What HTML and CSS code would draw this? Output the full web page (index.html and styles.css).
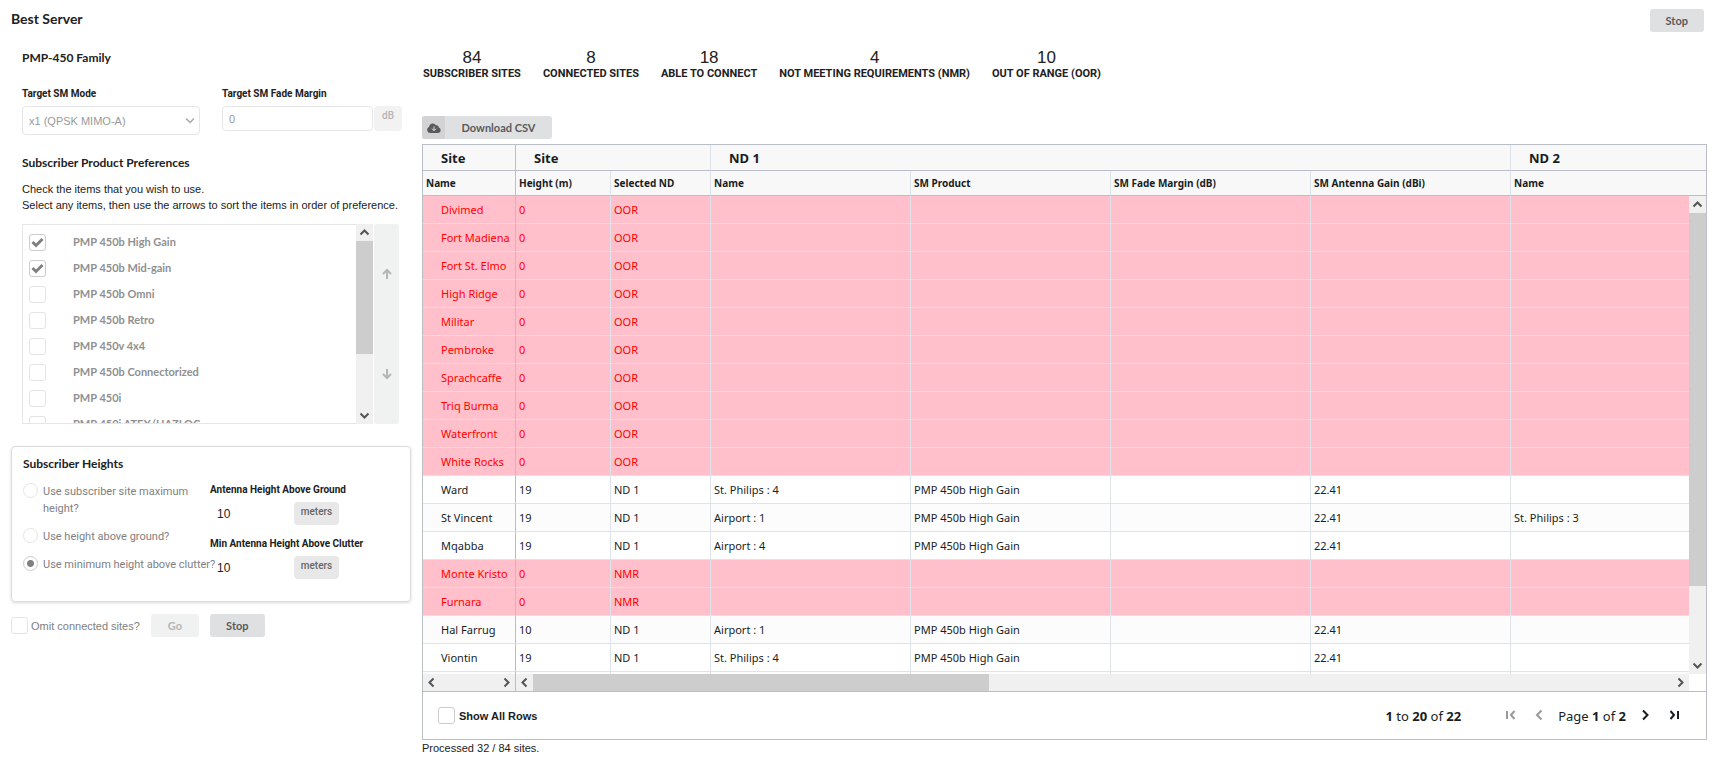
FILE: index.html
```html
<!DOCTYPE html>
<html lang="en">
<head>
<meta charset="utf-8">
<title>Best Server</title>
<link rel="stylesheet" href="styles.css">
</head>
<body>
<div class="page">
  <header class="page-header">
    <h1 class="page-title">Best Server</h1>
    <button class="btn" type="button">Stop</button>
  </header>
  <main class="layout">
    <form class="settings">
      <section class="family">
        <h2 class="heading">PMP-450 Family</h2>
        <div class="targets">
          <div class="field">
            <label class="label" for="mode">Target SM Mode</label>
            <select class="select" id="mode" disabled><option>x1 (QPSK MIMO-A)</option></select>
          </div>
          <div class="field">
            <label class="label" for="fade">Target SM Fade Margin</label>
            <div class="input-group">
              <input class="input" id="fade" type="text" value="0" disabled>
              <span class="unit">dB</span>
            </div>
          </div>
        </div>
        <h2 class="heading heading-prefs">Subscriber Product Preferences</h2>
        <p class="help">Check the items that you wish to use.<br>Select any items, then use the arrows to sort the items in order of preference.</p>
        <div class="picker">
          <ul class="products">
            <li><label class="product"><input class="check" type="checkbox" checked disabled>PMP 450b High Gain</label></li>
            <li><label class="product"><input class="check" type="checkbox" checked disabled>PMP 450b Mid-gain</label></li>
            <li><label class="product"><input class="check" type="checkbox" disabled>PMP 450b Omni</label></li>
            <li><label class="product"><input class="check" type="checkbox" disabled>PMP 450b Retro</label></li>
            <li><label class="product"><input class="check" type="checkbox" disabled>PMP 450v 4x4</label></li>
            <li><label class="product"><input class="check" type="checkbox" disabled>PMP 450b Connectorized</label></li>
            <li><label class="product"><input class="check" type="checkbox" disabled>PMP 450i</label></li>
            <li><label class="product"><input class="check" type="checkbox" disabled>PMP 450i ATEX/HAZLOC</label></li>
          </ul>
          <div class="vbar">
            <svg class="arrow" viewBox="0 0 17 17"><path d="M4.5 10.5l4-4 4 4"/></svg>
            <div class="vtrack"><div class="thumb list-thumb"></div></div>
            <svg class="arrow" viewBox="0 0 17 17"><path d="M4.5 6.500l4 4 4-4"/></svg>
          </div>
          <div class="sorter">
            <button class="sort" type="button" aria-label="Move up" disabled><svg viewBox="0 0 12 12"><path d="M6 11V2M2 6l4-4 4 4"/></svg></button>
            <button class="sort" type="button" aria-label="Move down" disabled><svg viewBox="0 0 12 12"><path d="M6 1v9M2 6l4 4 4-4"/></svg></button>
          </div>
        </div>
      </section>
      <section class="card">
        <h2 class="heading">Subscriber Heights</h2>
        <div class="heights">
          <div class="radios">
            <label class="choice choice-wrap"><input class="radio" type="radio" name="h" disabled><span>Use subscriber site maximum height?</span></label>
            <label class="choice"><input class="radio" type="radio" name="h" disabled><span>Use height above ground?</span></label>
            <label class="choice"><input class="radio" type="radio" name="h" checked disabled><span>Use minimum height above clutter?</span></label>
          </div>
          <div class="measures">
            <label class="label" for="ground">Antenna Height Above Ground</label>
            <div class="measure"><input class="plain" id="ground" type="text" value="10"><span class="unit unit-dark">meters</span></div>
            <label class="label" for="clutter">Min Antenna Height Above Clutter</label>
            <div class="measure"><input class="plain" id="clutter" type="text" value="10"><span class="unit unit-dark">meters</span></div>
          </div>
        </div>
      </section>
      <div class="actions">
        <label class="omit"><input class="check" type="checkbox" disabled>Omit connected sites?</label>
        <button class="btn btn-go" type="button" disabled>Go</button>
        <button class="btn btn-stop" type="button">Stop</button>
      </div>
    </form>
    <section class="results">
      <dl class="stats">
        <div class="stat"><dt>SUBSCRIBER SITES</dt><dd>84</dd></div>
        <div class="stat"><dt>CONNECTED SITES</dt><dd>8</dd></div>
        <div class="stat"><dt>ABLE TO CONNECT</dt><dd>18</dd></div>
        <div class="stat"><dt>NOT MEETING REQUIREMENTS (NMR)</dt><dd>4</dd></div>
        <div class="stat"><dt>OUT OF RANGE (OOR)</dt><dd>10</dd></div>
      </dl>
      <button class="download" type="button">
        <span class="download-icon"><svg viewBox="0 0 14 10"><path class="cloud" d="M3.2 10A3.2 3.2 0 0 1 2 3.9 3.8 3.8 0 0 1 9 2.2a2.3 2.3 0 0 1 2.8 2.4A2.8 2.8 0 0 1 11.3 10z"/><path class="down" d="M7 3.5v4M5 5.7l2 2 2-2"/></svg></span>
        <span class="download-text">Download CSV</span>
      </button>
      <div class="grid">
        <div class="viewport">
          <table class="table">
            <colgroup><col class="c-site"><col class="c-height"><col class="c-nd"><col class="c-wide"><col class="c-wide"><col class="c-wide"><col class="c-wide"><col></colgroup>
            <thead>
              <tr class="groups"><th>Site</th><th colspan="2">Site</th><th colspan="4">ND 1</th><th>ND 2</th></tr>
              <tr class="columns"><th>Name</th><th>Height (m)</th><th>Selected ND</th><th>Name</th><th>SM Product</th><th>SM Fade Margin (dB)</th><th>SM Antenna Gain (dBi)</th><th>Name</th></tr>
            </thead>
            <tbody>
              <tr class="bad"><td>Divimed</td><td>0</td><td>OOR</td><td></td><td></td><td></td><td></td><td></td></tr>
              <tr class="bad"><td>Fort Madiena</td><td>0</td><td>OOR</td><td></td><td></td><td></td><td></td><td></td></tr>
              <tr class="bad"><td>Fort St. Elmo</td><td>0</td><td>OOR</td><td></td><td></td><td></td><td></td><td></td></tr>
              <tr class="bad"><td>High Ridge</td><td>0</td><td>OOR</td><td></td><td></td><td></td><td></td><td></td></tr>
              <tr class="bad"><td>Militar</td><td>0</td><td>OOR</td><td></td><td></td><td></td><td></td><td></td></tr>
              <tr class="bad"><td>Pembroke</td><td>0</td><td>OOR</td><td></td><td></td><td></td><td></td><td></td></tr>
              <tr class="bad"><td>Sprachcaffe</td><td>0</td><td>OOR</td><td></td><td></td><td></td><td></td><td></td></tr>
              <tr class="bad"><td>Triq Burma</td><td>0</td><td>OOR</td><td></td><td></td><td></td><td></td><td></td></tr>
              <tr class="bad"><td>Waterfront</td><td>0</td><td>OOR</td><td></td><td></td><td></td><td></td><td></td></tr>
              <tr class="bad"><td>White Rocks</td><td>0</td><td>OOR</td><td></td><td></td><td></td><td></td><td></td></tr>
              <tr><td>Ward</td><td>19</td><td>ND 1</td><td>St. Philips : 4</td><td>PMP 450b High Gain</td><td></td><td>22.41</td><td></td></tr>
              <tr><td>St Vincent</td><td>19</td><td>ND 1</td><td>Airport : 1</td><td>PMP 450b High Gain</td><td></td><td>22.41</td><td>St. Philips : 3</td></tr>
              <tr><td>Mqabba</td><td>19</td><td>ND 1</td><td>Airport : 4</td><td>PMP 450b High Gain</td><td></td><td>22.41</td><td></td></tr>
              <tr class="bad"><td>Monte Kristo</td><td>0</td><td>NMR</td><td></td><td></td><td></td><td></td><td></td></tr>
              <tr class="bad"><td>Furnara</td><td>0</td><td>NMR</td><td></td><td></td><td></td><td></td><td></td></tr>
              <tr><td>Hal Farrug</td><td>10</td><td>ND 1</td><td>Airport : 1</td><td>PMP 450b High Gain</td><td></td><td>22.41</td><td></td></tr>
              <tr><td>Viontin</td><td>19</td><td>ND 1</td><td>St. Philips : 4</td><td>PMP 450b High Gain</td><td></td><td>22.41</td><td></td></tr>
              <tr><td></td><td></td><td></td><td></td><td></td><td></td><td></td><td></td></tr>
            </tbody>
          </table>
          <div class="vbar grid-vbar">
            <svg class="arrow" viewBox="0 0 17 17"><path d="M4.5 10.5l4-4 4 4"/></svg>
            <div class="vtrack"><div class="thumb grid-thumb"></div></div>
            <svg class="arrow" viewBox="0 0 17 17"><path d="M4.5 6.500l4 4 4-4"/></svg>
          </div>
        </div>
        <div class="hbars">
          <div class="hbar hbar-pinned">
            <svg class="arrow" viewBox="0 0 17 17"><path d="M10.5 4.5l-4 4 4 4"/></svg>
            <svg class="arrow" viewBox="0 0 17 17"><path d="M6.500 4.5l4 4-4 4"/></svg>
          </div>
          <div class="hbar hbar-main">
            <svg class="arrow" viewBox="0 0 17 17"><path d="M10.5 4.5l-4 4 4 4"/></svg>
            <div class="htrack"><div class="thumb h-thumb"></div></div>
            <svg class="arrow" viewBox="0 0 17 17"><path d="M6.500 4.5l4 4-4 4"/></svg>
          </div>
        </div>
        <footer class="pager">
          <label class="show-all"><input class="check check-on" type="checkbox">Show All Rows</label>
          <span class="range"><b>1</b> to <b>20</b> of <b>22</b></span>
          <nav class="pages">
            <button class="nav" type="button" aria-label="First page" disabled><svg viewBox="0 0 16 16"><path d="M5 3v8M12.500 3L9 7l3.500 4"/></svg></button>
            <button class="nav" type="button" aria-label="Previous page" disabled><svg viewBox="0 0 16 16"><path d="M11.500 2.500L7 7l4.500 4.500"/></svg></button>
            <span>Page <b>1</b> of <b>2</b></span>
            <button class="nav" type="button" aria-label="Next page"><svg viewBox="0 0 16 16"><path d="M5 2.500l4.500 4.500-4.500 4.500"/></svg></button>
            <button class="nav" type="button" aria-label="Last page"><svg viewBox="0 0 16 16"><path d="M12 3v8M4.500 3l3.500 4-3.500 4"/></svg></button>
          </nav>
        </footer>
      </div>
      <p class="status">Processed 32 / 84 sites.</p>
    </section>
  </main>
</div>
</body>
</html>
```
FILE: styles.css
```css
* { box-sizing: border-box; }
body {
  margin: 0;
  background: #fff;
  color: #212121;
  font: 11px/16px "Liberation Sans", Arial, sans-serif;
}
h1, h2, p, ul, dl, dd { margin: 0; padding: 0; }
ul { list-style: none; }
button, input, select { font: inherit; color: inherit; margin: 0; }
button { border: 0; background: none; padding: 0; }
svg { display: block; fill: none; stroke: currentColor; }

.page { display: flex; flex-direction: column; height: 100vh; min-height: 660px; }
.page-header {
  display: flex;
  align-items: flex-start;
  justify-content: space-between;
  padding: 9px 14px 0 11px;
}
.page-title { font: bold 14px/20px Lato, sans-serif; }
.btn {
  height: 23px;
  padding: 0 16px;
  border-radius: 3px;
  background: #dfe0e2;
  color: #5a5a5a;
  font: bold 11px/23px Lato, sans-serif;
}
.btn-go { padding: 0 17px; background: #f0f2f2; color: #b4b6b6; }

.layout {
  flex: 1;
  min-height: 0;
  display: grid;
  grid-template-columns: 400px minmax(0, 1fr);
  gap: 11px;
  padding: 0 11px;
}
.heading { font: bold 12px/18px Lato, sans-serif; }
.family { padding: 17px 12px 0 11px; }
.targets { display: grid; grid-template-columns: 178px 180px; gap: 22px; margin-top: 20px; }
.field { display: flex; flex-direction: column; gap: 5px; }
.label { font: bold 10px/14px Roboto, sans-serif; }
.select {
  appearance: none;
  width: 100%;
  height: 29px;
  padding: 0 6px;
  border: 1px solid #e6e6e6;
  border-radius: 4px;
  background: #fff url("data:image/svg+xml,%3Csvg xmlns='http://www.w3.org/2000/svg' width='10' height='8'%3E%3Cpath d='M1 1.500l4 4 4-4' fill='none' stroke='%23a8a8a8' stroke-width='1.500'/%3E%3C/svg%3E") no-repeat right 4px center;
  color: #999;
  opacity: 1;
}
.input-group { display: flex; gap: 1px; }
.input {
  flex: 1;
  min-width: 0;
  height: 25px;
  padding: 0 6px;
  border: 1px solid #e6e6e6;
  border-radius: 4px;
  background: #fff;
  color: #999;
}
.unit {
  width: 28px;
  height: 25px;
  border-radius: 4px;
  background: #f2f2f2;
  color: #b5b5b5;
  font: 500 10px/19px Roboto, sans-serif;
  text-align: center;
}
.unit-dark { width: 45px; height: 23px; background: #e8e8e8; color: #666; }
.heading-prefs { margin-top: 19px; }
.help { margin-top: 9px; white-space: nowrap; }

.picker { display: flex; height: 200px; margin-top: 11px; }
.products {
  flex: 1;
  overflow: hidden;
  padding: 4px 0 0 6px;
  border: 1px solid #e6e6e6;
  border-right: 0;
}
.product {
  display: flex;
  align-items: center;
  gap: 27px;
  height: 26px;
  color: #909090;
  font: bold 11px/16px Lato, sans-serif;
}
.check {
  appearance: none;
  flex: none;
  width: 17px;
  height: 17px;
  border: 1px solid #e4e4e4;
  border-radius: 3px;
  background: #fff;
}
.check:checked {
  border-color: #ccc;
  background: #fff url("data:image/svg+xml,%3Csvg xmlns='http://www.w3.org/2000/svg' width='15' height='15'%3E%3Cpath d='M2.500 7l3.500 3.500 6.500-6.500' fill='none' stroke='%23808080' stroke-width='3'/%3E%3C/svg%3E") center;
}
.check-on { border-color: #ccc; }
.vbar { display: flex; flex-direction: column; width: 17px; background: #f0f0f0; }
.arrow { flex: none; width: 17px; height: 17px; color: #555; stroke-width: 2; }
.vtrack, .htrack { flex: 1; }
.thumb { background: #cdcdcd; }
.list-thumb { height: 68%; }
.sorter {
  display: flex;
  flex-direction: column;
  width: 25px;
  margin-left: 1px;
  border-radius: 3px;
  background: #f0f2f2;
}
.sort { flex: 1; display: grid; place-items: center; color: #b4b6b6; }
.sort svg { width: 12px; height: 12px; stroke-width: 2; }

.card {
  margin-top: 22px;
  padding: 8px 11px 10px;
  border: 1px solid #dcdcdc;
  border-radius: 4px;
  box-shadow: 0 1px 3px rgba(0, 0, 0, .15);
}
.heights { display: grid; grid-template-columns: 187px 1fr; margin-top: 10px; }
.radios { display: flex; flex-direction: column; gap: 11px; color: #808080; font: 11px/17px Roboto, sans-serif; }
.choice { display: flex; gap: 5px; white-space: nowrap; }
.choice-wrap { padding-right: 20px; white-space: normal; }
.radio {
  appearance: none;
  flex: none;
  width: 15px;
  height: 15px;
  border: 1px solid #e4e4e4;
  border-radius: 50%;
}
.radio:checked { border-color: #ccc; background: radial-gradient(circle, #808080 3px, transparent 4px); }
.measures { display: flex; flex-direction: column; }
.measure { display: flex; gap: 11px; margin: 5px 0 12px; }
.plain { width: 73px; height: 23px; padding: 0 7px; border: 0; background: none; font-size: 12px; }
.actions { display: flex; align-items: center; gap: 11px; margin-top: 12px; }
.omit { display: flex; align-items: center; gap: 3px; color: #808080; }

.results { display: flex; flex-direction: column; align-items: flex-start; min-height: 0; padding: 16px 0 10px; }
.stats { display: flex; gap: 22px; padding-left: 1px; }
.stat { display: flex; flex-direction: column-reverse; text-align: center; }
.stat dt { font: bold 11px/12px Roboto, sans-serif; }
.stat dd { font-size: 17px; line-height: 20px; }
.download {
  display: flex;
  height: 23px;
  width: 130px;
  flex: none;
  margin-top: 36px;
  border-radius: 3px;
  overflow: hidden;
  background: #dfe0e2;
  color: #5a5a5a;
  font: bold 11px/23px Lato, sans-serif;
}
.download-icon { display: grid; place-items: center; width: 23px; height: 23px; background: #d2d3d5; }
.download-icon svg { width: 14px; height: 10px; }
.cloud { fill: #5a5a5a; stroke: none; }
.down { stroke: #dfe0e2; }
.download-text { flex: 1; }

.grid {
  flex: 1;
  align-self: stretch;
  min-height: 0;
  display: flex;
  flex-direction: column;
  margin-top: 5px;
  border: 1px solid #babfc7;
  color: #181d1f;
  font: 11px/16px "Noto Sans", sans-serif;
}
.viewport { position: relative; flex: 1; min-height: 0; overflow: hidden; }
.table { width: 100%; table-layout: fixed; border-collapse: separate; border-spacing: 0; }
.c-site { width: 93px; }
.c-height { width: 95px; }
.c-nd { width: 100px; }
.c-wide { width: 200px; }
.table th {
  padding: 0 3px;
  border-bottom: 1px solid #babfc7;
  border-right: 1px solid #dde2eb;
  background: #f8f8f8;
  text-align: left;
  font-size: 10px;
}
.table .groups th { height: 26px; padding: 0 18px; font-size: 13px; }
.columns th { height: 25px; }
.table td {
  height: 28px;
  padding: 0 3px;
  border-bottom: 1px solid #dde2eb;
  border-right: 1px solid #dde2eb;
  white-space: nowrap;
}
.table td:first-child { padding: 0 0 0 18px; }
.table th:first-child, .table td:first-child { border-right-color: #babfc7; }
.table th:last-child, .table td:last-child { border-right: 0; }
.table tbody tr:nth-child(even) { background: #fcfcfc; }
.table tbody .bad, .table tbody .bad:nth-child(even) { background: #ffc0cb; color: #f00; }
.grid-vbar { position: absolute; top: 51px; right: 0; bottom: 0; }
.grid-thumb { height: 84%; }
.hbars { display: flex; height: 17px; padding-right: 17px; }
.hbar { display: flex; justify-content: space-between; background: #f0f0f0; }
.hbar-pinned { width: 93px; border-right: 1px solid #babfc7; }
.hbar-main { flex: 1; }
.h-thumb { width: 40%; height: 17px; }
.pager {
  display: flex;
  align-items: center;
  height: 48px;
  padding: 0 24px 0 15px;
  border-top: 1px solid #babfc7;
  font-size: 13px;
}
.show-all {
  display: flex;
  align-items: center;
  gap: 4px;
  margin-right: auto;
  font: bold 11px/16px "Liberation Sans", Arial, sans-serif;
}
.pages { display: flex; align-items: center; gap: 12px; margin-left: 41px; }
.nav { width: 16px; height: 16px; }
.nav svg { width: 16px; height: 16px; stroke-width: 2; }
.nav:disabled { color: #999; }
```
